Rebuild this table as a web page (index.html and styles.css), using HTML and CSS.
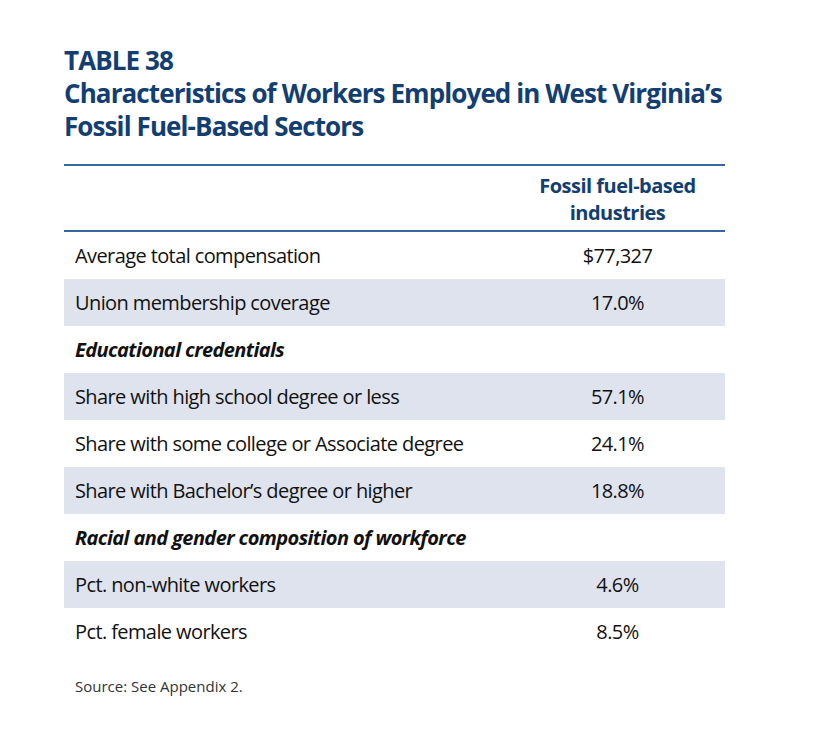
FILE: index.html
```html
<!DOCTYPE html>
<html>
<head>
<meta charset="utf-8">
<link rel="stylesheet" href="styles.css">
</head>
<body>
<div class="page">
  <h1 class="title"><span class="label">TABLE 38</span><br>Characteristics of Workers Employed in West Virginia’s<br>Fossil Fuel-Based Sectors</h1>
  <div class="table">
    <div class="head">
      <div class="cell-label"></div>
      <div class="cell-val">Fossil fuel-based<br>industries</div>
    </div>
    <div class="row"><div class="cell-label">Average total compensation</div><div class="cell-val">$77,327</div></div>
    <div class="row shade"><div class="cell-label">Union membership coverage</div><div class="cell-val">17.0%</div></div>
    <div class="row section"><div class="cell-label">Educational credentials</div><div class="cell-val"></div></div>
    <div class="row shade"><div class="cell-label">Share with high school degree or less</div><div class="cell-val">57.1%</div></div>
    <div class="row"><div class="cell-label">Share with some college or Associate degree</div><div class="cell-val">24.1%</div></div>
    <div class="row shade"><div class="cell-label">Share with Bachelor’s degree or higher</div><div class="cell-val">18.8%</div></div>
    <div class="row section"><div class="cell-label">Racial and gender composition of workforce</div><div class="cell-val"></div></div>
    <div class="row shade"><div class="cell-label">Pct. non-white workers</div><div class="cell-val">4.6%</div></div>
    <div class="row"><div class="cell-label">Pct. female workers</div><div class="cell-val">8.5%</div></div>
  </div>
  <p class="source">Source: See Appendix 2.</p>
</div>
</body>
</html>
```

FILE: styles.css
```css
html, body {
  margin: 0;
  padding: 0;
  background: #ffffff;
}
body {
  font-family: "Open Sans", "Noto Sans", sans-serif;
  color: #111111;
}
.page {
  width: 661px;
  padding: 44px 0 0 64px;
}
.title {
  margin: 0;
  font-size: 26px;
  line-height: 33px;
  font-weight: 700;
  color: #123e72;
  letter-spacing: -0.9px;
}
.table {
  margin-top: 21px;
  border-top: 2px solid #3468a3;
}
.head {
  display: grid;
  grid-template-columns: 446px 215px;
  height: 64px;
  border-bottom: 2px solid #3468a3;
}
.head .cell-val {
  font-weight: 700;
  color: #123e72;
  font-size: 20px;
  line-height: 27px;
  letter-spacing: -0.5px;
  text-align: center;
  padding-top: 6px;
}
.row {
  display: grid;
  grid-template-columns: 446px 215px;
  height: 47px;
  align-items: center;
  font-size: 20px;
  letter-spacing: -0.6px;
}
.row.shade {
  background: #dee3ee;
}
.cell-label {
  padding-left: 11px;
}
.row .cell-val {
  text-align: center;
}
.row.section .cell-label {
  font-weight: 700;
  font-style: italic;
}
.source {
  margin: 21px 0 0 11px;
  font-size: 15px;
  color: #333333;
  letter-spacing: 0;
}
```
